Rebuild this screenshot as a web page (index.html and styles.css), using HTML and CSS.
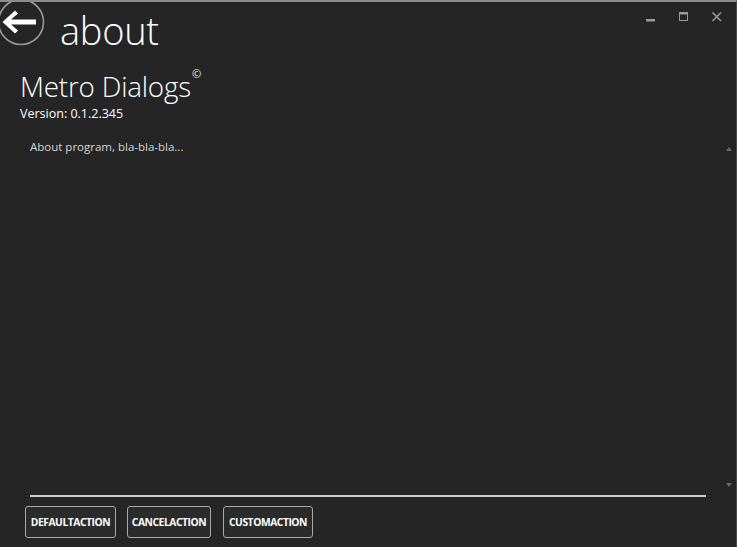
FILE: index.html
```html
<!DOCTYPE html>
<html>
<head>
<meta charset="utf-8">
<link rel="stylesheet" href="styles.css">
</head>
<body>
<div class="window">
  <div class="header">
    <div class="back">
      <svg width="48" height="48" viewBox="0 0 48 48">
        <circle cx="22" cy="22" r="22.5" fill="none" stroke="#9a9a9a" stroke-width="1.6"/>
        <path d="M3.5 22 L16 10.5 L19 13.5 L12 19.5 L37 19.5 L37 24.5 L12 24.5 L19 30.5 L16 33.5 Z" fill="#ffffff"/>
      </svg>
    </div>
    <div class="title">about</div>
    <div class="controls">
      <svg class="ctl" width="12" height="12" viewBox="0 0 12 12"><rect x="1" y="8" width="9" height="2.5" fill="#9a9a9a"/></svg>
      <svg class="ctl" width="12" height="12" viewBox="0 0 12 12"><rect x="1.5" y="1.5" width="8" height="8" fill="none" stroke="#9a9a9a" stroke-width="1"/><rect x="1" y="1" width="9" height="2.5" fill="#9a9a9a"/></svg>
      <svg class="ctl" width="12" height="12" viewBox="0 0 12 12"><path d="M1.5 1.5 L10 10 M10 1.5 L1.5 10" stroke="#9a9a9a" stroke-width="1.6"/></svg>
    </div>
  </div>
  <div class="info">
    <div class="app">Metro Dialogs<span class="copy">©</span></div>
    <div class="version">Version: 0.1.2.345</div>
  </div>
  <div class="body">
    <div class="text">About program, bla-bla-bla...</div>
    <div class="scroll">
      <span class="tri up"></span>
      <span class="tri down"></span>
    </div>
  </div>
  <div class="sep"></div>
  <div class="buttons">
    <button class="btn w1">DEFAULTACTION</button>
    <button class="btn w2">CANCELACTION</button>
    <button class="btn w3">CUSTOMACTION</button>
  </div>
</div>
</body>
</html>
```
FILE: styles.css
```css
html, body {
  margin: 0;
  padding: 0;
  background: #252525;
}
.window {
  width: 736px;
  height: 545px;
  border-top: 2px solid #8c8c8c;
  border-right: 1px solid #4a4a4a;
  background: #252525;
  display: flex;
  flex-direction: column;
  font-family: "Open Sans", "Liberation Sans", sans-serif;
  color: #ffffff;
  overflow: hidden;
  position: relative;
}
.header {
  display: flex;
  align-items: flex-start;
  height: 46px;
}
.back {
  width: 48px;
  height: 48px;
  margin-top: -2px;
  margin-left: -1px;
}
.back svg { display: block; }
.title {
  font-size: 38px;
  font-weight: 300;
  line-height: 46px;
  margin-left: 13px;
  margin-top: 5px;
  letter-spacing: -0.3px;
}
.controls {
  margin-left: auto;
  display: flex;
  gap: 21px;
  margin-top: 9px;
  margin-right: 13px;
}
.ctl { display: block; }
.info {
  padding-left: 20px;
  margin-top: 21px;
}
.app {
  font-size: 27.8px;
  font-weight: 300;
  line-height: 34px;
  position: relative;
  display: inline-block;
  letter-spacing: -0.2px;
}
.copy {
  position: absolute;
  font-size: 11px;
  font-weight: 400;
  top: -1px;
  right: -10px;
  line-height: 12px;
  color: #fff6d8;
}
.version {
  font-size: 12.5px;
  line-height: 16px;
  margin-top: 3px;
}
.body {
  flex: 1;
  display: flex;
  margin-top: 12px;
}
.text {
  flex: 1;
  padding-left: 30px;
  font-size: 11.5px;
  line-height: 16px;
  color: #d6d6d6;
  padding-top: 5px;
}
.scroll {
  width: 10px;
  margin-right: 2px;
  display: flex;
  flex-direction: column;
  justify-content: space-between;
  align-items: center;
  padding: 13px 0 8px;
}
.tri {
  width: 0;
  height: 0;
  border-left: 3px solid transparent;
  border-right: 3px solid transparent;
}
.tri.up { border-bottom: 4px solid #6a6a6a; }
.tri.down { border-top: 4px solid #6a6a6a; }
.sep {
  height: 2px;
  background: #cfcfcf;
  margin: 0 30px 0 30px;
}
.buttons {
  display: flex;
  gap: 11px;
  padding: 9px 0 9px 25px;
}
.btn {
  height: 32px;
  border: 1px solid #a8a8a8;
  border-radius: 3px;
  background: #2b2b2b;
  color: #ffffff;
  font-family: "Open Sans", "Liberation Sans", sans-serif;
  font-weight: 700;
  font-size: 10.3px;
  letter-spacing: -0.45px;
  padding: 0;
}
.w1 { width: 91px; }
.w2 { width: 84px; }
.w3 { width: 90px; margin-left: 1px; }
```
